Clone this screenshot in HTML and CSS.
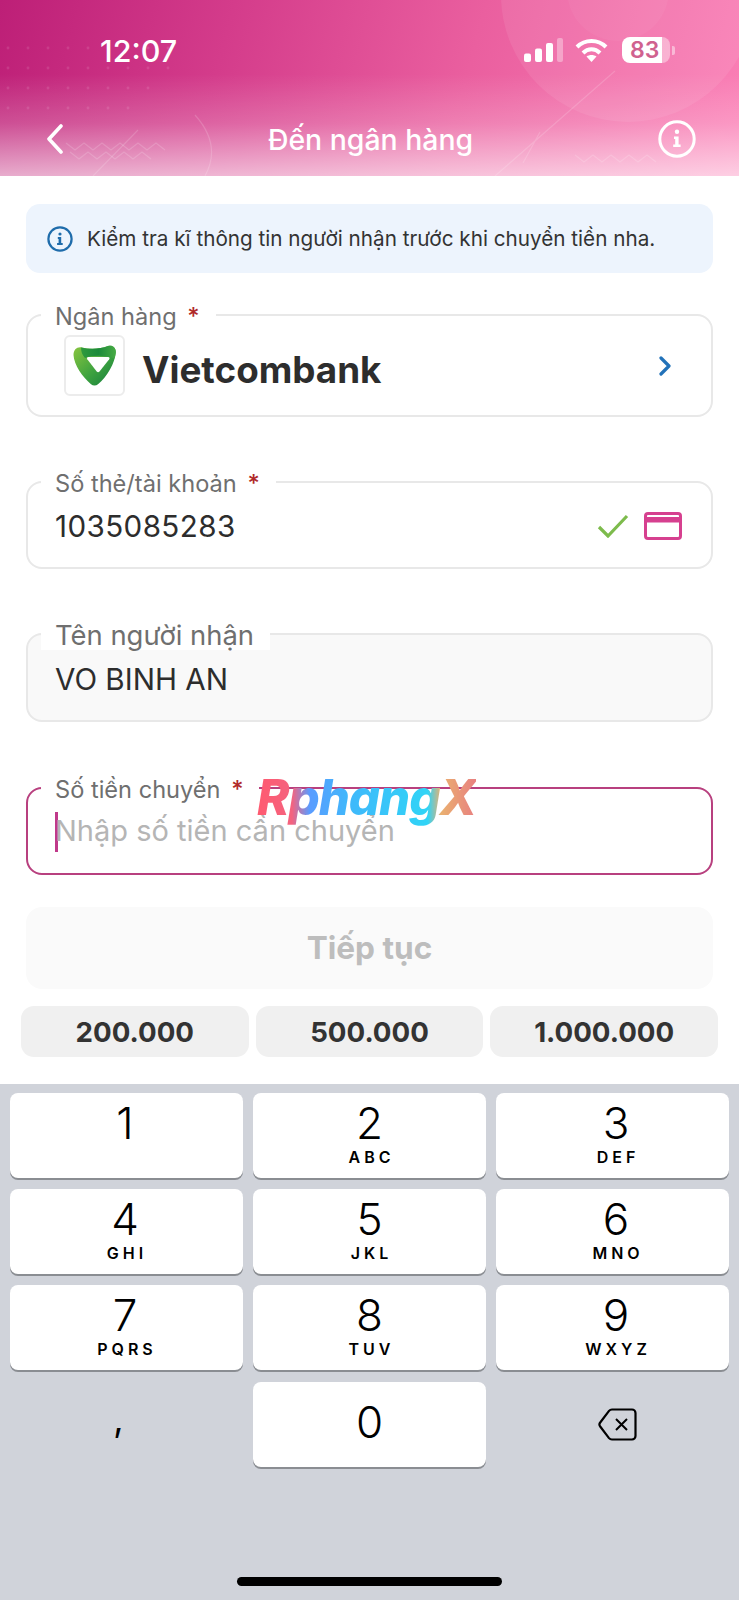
FILE: index.html
```html
<!DOCTYPE html>
<html lang="vi">
<head>
	<meta charset="utf-8">
	<title>Đến ngân hàng</title>
	<link rel="stylesheet" href="styles.css">
</head>
<body>
	<header class="top">
		<svg class="top-art" viewBox="0 0 739 176" width="739" height="176">
			<defs>
				<pattern id="dots" width="20" height="20" patternUnits="userSpaceOnUse">
					<circle cx="8" cy="8" r="1.4" fill="#fff" fill-opacity=".1"/>
				</pattern>
			</defs>
			<path d="M0 30H175V72L120 118H0Z" fill="url(#dots)"/>
			<circle cx="628" cy="-5" r="127" fill="#fff" fill-opacity=".08"/>
			<circle cx="618" cy="-10" r="51" fill="#fff" fill-opacity=".04"/>
			<g fill="none" stroke="#fff" stroke-opacity=".16" stroke-width="1.2">
				<path d="M615 71 495 176M540 132 523 163M138 130 93 176"/>
				<path d="M195 115Q222 145 205 176"/>
				<path d="M66 143l9 7 9-7 9 7 9-7 9 7 9-7 9 7 9-7 9 7 9-7 9 7"/>
				<path d="M70 152l9 7 9-7 9 7 9-7 9 7 9-7 9 7 9-7 9 7"/>
				<path d="M575 155l9 7 9-7 9 7 9-7 9 7 9-7 9 7 9-7 9 7"/>
			</g>
		</svg>
		<div class="status">
			<span class="time">12:07</span>
			<div class="status-icons">
				<svg class="signal" width="40" height="24" viewBox="0 0 40 24">
					<rect x="0" y="15.5" width="7" height="8.5" rx="2" fill="#fff"/>
					<rect x="11" y="10.5" width="7" height="13.5" rx="2" fill="#fff"/>
					<rect x="22" y="5" width="7" height="19" rx="2" fill="#fff"/>
					<rect x="33" y="0" width="6" height="24" rx="2" fill="#fff" fill-opacity=".35"/>
				</svg>
				<svg class="wifi" width="33" height="24" viewBox="0 0 33 24">
					<g fill="none" stroke="#fff" stroke-width="4">
						<path d="M2 9C10 1 23 1 31 9"/>
						<path d="M8 15C13 10 20 10 25 15"/>
					</g>
					<path d="M11.5 18.5C14.5 16.5 18.5 16.5 21.5 18.5L16.5 24Z" fill="#fff"/>
				</svg>
				<div class="battery">
					<span class="battery-level">83</span>
				</div>
				<span class="battery-nub"></span>
			</div>
		</div>
		<nav class="bar">
			<svg class="back" width="18" height="30" viewBox="0 0 18 30">
				<path d="M15 2 3 15l12 13" fill="none" stroke="#fff" stroke-width="3.6" stroke-linecap="round" stroke-linejoin="round"/>
			</svg>
			<h1 class="title">Đến ngân hàng</h1>
			<svg width="38" height="38" viewBox="0 0 38 38">
				<circle cx="19" cy="19" r="17.2" fill="none" stroke="#fff" stroke-width="3"/>
				<circle cx="19" cy="11.8" r="2.2" fill="#fff"/>
				<path d="M16 16.5h4.6v8h2v2.5h-7.4v-2.5h2v-5.5h-1.2z" fill="#fff"/>
			</svg>
		</nav>
	</header>

	<main class="form">
		<div class="notice">
			<svg width="26" height="26" viewBox="0 0 26 26">
				<circle cx="13" cy="13" r="11.6" fill="none" stroke="#1f6cab" stroke-width="2.2"/>
				<circle cx="13" cy="8" r="1.6" fill="#1f6cab"/>
				<path d="M10.8 11h3.4v6h1.5v2h-5.6v-2h1.5v-4h-.8z" fill="#1f6cab"/>
			</svg>
			<p class="notice-text">Kiểm tra kĩ thông tin người nhận trước khi chuyển tiền nha.</p>
		</div>

		<div class="field field-bank">
			<label class="field-label">Ngân hàng <b class="req">*</b></label>
			<div class="bank-logo">
				<svg width="43" height="41" viewBox="0 0 43 41">
					<defs>
						<linearGradient id="vcbMain" x1="0" y1="0" x2="1" y2="1">
							<stop offset="0" stop-color="#8ac640"/>
							<stop offset=".55" stop-color="#3da23f"/>
							<stop offset="1" stop-color="#127c3d"/>
						</linearGradient>
						<linearGradient id="vcbTop" x1="0" y1="0" x2="1" y2="0">
							<stop offset="0" stop-color="#2f9a3e"/>
							<stop offset=".5" stop-color="#1c8a3b"/>
							<stop offset="1" stop-color="#47ab44"/>
						</linearGradient>
					</defs>
					<path d="M.5 10C.5 4.500 4 1.500 9 2.500 17 4.500 27 4.200 35 1 39.500-.3 43 2.500 42.800 7.500 42 18 34 32 25 39.300 23 41 20 41 18 39.300 9.500 32 1 20 .5 10Z" fill="url(#vcbMain)"/>
					<path d="M8 2.500C17 4.500 27 4.200 35 1 39.500-.3 43 2.500 42.800 7.500 42.600 9.500 42 11.500 41.500 13.500 32 10 20 10 12 13 9 10 8 6 8 2.500Z" fill="url(#vcbTop)"/>
					<path d="M15.500 12H35C36.500 12 37 13 36.200 14.200L26.500 26.500C25.700 27.500 24.500 27.500 23.700 26.500L14.300 14.200C13.500 13 14 12 15.500 12Z" fill="#fff"/>
				</svg>
			</div>
			<span class="bank-name">Vietcombank</span>
			<svg class="chevron" width="14" height="20" viewBox="0 0 14 20">
				<path d="M3 2l8 8-8 8" fill="none" stroke="#2272b9" stroke-width="3.200" stroke-linecap="round" stroke-linejoin="round"/>
			</svg>
		</div>

		<div class="field field-account">
			<label class="field-label">Số thẻ/tài khoản <b class="req">*</b></label>
			<span class="value">1035085283</span>
			<svg class="check" width="32" height="24" viewBox="0 0 32 24">
				<path d="M2 13l9 9L30 2" fill="none" stroke="#7dbb4c" stroke-width="3.200"/>
			</svg>
			<svg class="card" width="38" height="28" viewBox="0 0 38 28">
				<rect x="1.500" y="1.500" width="35" height="25" rx="2.500" fill="none" stroke="#d6408f" stroke-width="3"/>
				<rect x="1.500" y="5" width="35" height="5.500" fill="#d6408f"/>
			</svg>
		</div>

		<div class="field field-name">
			<label class="field-label field-label-big">Tên người nhận</label>
			<span class="value">VO BINH AN</span>
		</div>

		<div class="field field-amount">
			<label class="field-label">Số tiền chuyển <b class="req">*</b></label>
			<span class="caret"></span>
			<span class="value placeholder">Nhập số tiền cần chuyển</span>
			<span class="watermark">RphangX</span>
		</div>

		<button class="next" type="button">Tiếp tục</button>

		<div class="chips">
			<span class="chip">200.000</span>
			<span class="chip">500.000</span>
			<span class="chip">1.000.000</span>
		</div>
	</main>

	<section class="keyboard">
		<div class="keys">
			<div class="key"><span class="digit">1</span></div>
			<div class="key"><span class="digit">2</span><span class="letters">ABC</span></div>
			<div class="key"><span class="digit">3</span><span class="letters">DEF</span></div>
			<div class="key"><span class="digit">4</span><span class="letters">GHI</span></div>
			<div class="key"><span class="digit">5</span><span class="letters">JKL</span></div>
			<div class="key"><span class="digit">6</span><span class="letters">MNO</span></div>
			<div class="key"><span class="digit">7</span><span class="letters">PQRS</span></div>
			<div class="key"><span class="digit">8</span><span class="letters">TUV</span></div>
			<div class="key"><span class="digit">9</span><span class="letters">WXYZ</span></div>
			<div class="key-blank"><span class="comma">,</span></div>
			<div class="key key-solo"><span class="digit">0</span></div>
			<div class="key-blank">
				<svg class="delete" width="39" height="33" viewBox="0 0 39 33">
					<path d="M14 1.500H34a3.500 3.500 0 0 1 3.500 3.500V28a3.500 3.500 0 0 1-3.500 3.500H14a4 4 0 0 1-3-1.400L2.200 18.500a3.200 3.200 0 0 1 0-4L11 2.900a4 4 0 0 1 3-1.400Z" fill="none" stroke="#000" stroke-width="2.200"/>
					<path d="M18 11l11 11M29 11 18 22" fill="none" stroke="#000" stroke-width="2"/>
				</svg>
			</div>
		</div>
		<div class="home-bar"></div>
	</section>
</body>
</html>
```

FILE: styles.css
```css
* {
	box-sizing: border-box;
}

body {
	margin: 0;
	width: 739px;
	height: 1600px;
	overflow: hidden;
	background: #fff;
	font-family: Inter, "Noto Sans", sans-serif;
	color: #2d2d2d;
}

/* header */
.top {
	position: relative;
	height: 176px;
	background:
		linear-gradient(to bottom, rgba(255, 255, 255, 0) 42%, rgba(255, 255, 255, .2) 70%, rgba(255, 255, 255, .62) 100%),
		linear-gradient(105deg, #bd1f77 0%, #d43c8b 30%, #ea5f9f 62%, #fb80b6 100%);
	overflow: hidden;
}

.top-art {
	position: absolute;
	left: 0;
	top: 0;
}

.status {
	position: relative;
	height: 70px;
	padding: 30px 64px 0 100px;
	display: flex;
	align-items: center;
	justify-content: space-between;
}

.time {
	color: #fff;
	font-size: 30.5px;
	font-weight: 500;
}

.status-icons {
	display: flex;
	align-items: center;
}

.signal {
	margin-right: 11px;
}

.wifi {
	margin-right: 14px;
}

.battery {
	width: 48px;
	height: 26px;
	border-radius: 8px;
	background: linear-gradient(to right, #fff 83%, rgba(255, 255, 255, .4) 83%);
	display: flex;
	align-items: center;
	padding-left: 8px;
}

.battery-level {
	color: #d0628f;
	font-size: 23px;
	font-weight: 600;
}

.battery-nub {
	width: 3px;
	height: 9px;
	margin-left: 2px;
	border-radius: 0 2px 2px 0;
	background: rgba(255, 255, 255, .45);
}

.bar {
	position: relative;
	margin-top: 49px;
	height: 40px;
	padding: 0 41px 0 46px;
	display: grid;
	grid-template-columns: 37px 1fr 40px;
	align-items: center;
}

.title {
	margin: 0;
	text-align: center;
	color: #fff;
	font-size: 28.4px;
	font-weight: 500;
}

/* form */
.form {
	height: 908px;
	padding: 28px 26px 0;
	display: flex;
	flex-direction: column;
}

.notice {
	height: 69px;
	flex: none;
	padding-left: 21px;
	border-radius: 14px;
	background: #edf4fd;
	display: flex;
	align-items: center;
	gap: 14px;
}

.notice-text {
	margin: 0;
	font-size: 20.7px;
	color: #333;
}

.field {
	position: relative;
	flex: none;
	height: 88px;
	margin-top: 64px;
	padding: 2px 29px 0 27px;
	border: 2px solid #e8e8e8;
	border-radius: 16px;
	display: flex;
	align-items: center;
}

.field-label {
	position: absolute;
	left: 13px;
	top: -14px;
	padding: 0 16px 0 14px;
	background: #fff;
	color: #6f6f6f;
	font-size: 23.6px;
	line-height: 30px;
}

.field-label-big {
	top: -15px;
	font-size: 27.4px;
	line-height: 30px;
}

.req {
	color: #b02a2a;
	font-weight: 500;
	margin-left: 4px;
}

.value {
	font-size: 29.6px;
	flex: 1;
}

.field-account .value {
	letter-spacing: .4px;
}

.field-bank {
	height: 103px;
	margin-top: 41px;
	padding: 0 39px 0 36px;
}

.bank-logo {
	width: 61px;
	height: 61px;
	flex: none;
	border: 2px solid #ececec;
	border-radius: 6px;
	display: flex;
	align-items: center;
	justify-content: center;
}

.bank-name {
	flex: 1;
	margin-left: 17px;
	margin-top: 8px;
	font-size: 36.8px;
	font-weight: 700;
}

.check {
	margin-right: 15px;
}

.field-name {
	height: 89px;
	background: #f9f9f9;
}

.field-amount {
	margin-top: 65px;
	border-color: #b8407f;
}

.caret {
	width: 3px;
	height: 40px;
	margin-right: -3px;
	background: #c0398a;
}

.placeholder {
	color: #b5b5b5;
	font-size: 29px;
	margin-top: -3px;
}

.watermark {
	position: absolute;
	left: 229px;
	top: -21px;
	font-size: 49px;
	font-weight: 800;
	font-style: italic;
	letter-spacing: -1px;
	background: linear-gradient(to right, #ff5a70 0%, #f4637f 16%, #5a9cff 24%, #3fb8fb 42%, #30d4f6 78%, #eab070 84%, #e88080 100%);
	-webkit-background-clip: text;
	background-clip: text;
	color: transparent;
}

.next {
	flex: none;
	height: 82px;
	margin-top: 32px;
	padding-bottom: 3px;
	border: none;
	border-radius: 16px;
	background: #fafafa;
	color: #bdbdbd;
	font-family: inherit;
	font-size: 31.6px;
	font-weight: 700;
}

.chips {
	flex: none;
	margin: 17px -5px 0;
	display: grid;
	grid-template-columns: repeat(3, 1fr);
	gap: 7px;
}

.chip {
	height: 51px;
	border-radius: 13px;
	background: #f0f0f0;
	color: #333;
	font-size: 27.7px;
	font-weight: 700;
	display: flex;
	align-items: center;
	justify-content: center;
}

/* keyboard */
.keyboard {
	height: 516px;
	padding: 9px 10px 0;
	background: #d0d3da;
	display: flex;
	flex-direction: column;
}

.keys {
	display: grid;
	grid-template-columns: repeat(3, 233px);
	grid-auto-rows: 85px;
	column-gap: 10px;
	row-gap: 11.2px;
}

.key {
	padding-top: 8px;
	border-radius: 8px;
	background: #fff;
	box-shadow: 0 2px 0 #8a8d92;
	color: #000;
	display: flex;
	flex-direction: column;
	align-items: center;
}

.key:nth-child(3n) {
	padding-left: 7px;
}

.key:nth-child(3n+1) {
	padding-right: 3px;
}

.key-solo {
	padding-top: 18px;
}

.digit {
	font-size: 44px;
	line-height: 44px;
	font-weight: 300;
}

.letters {
	margin-top: 3px;
	font-size: 16px;
	line-height: 18px;
	font-weight: 600;
	letter-spacing: 4px;
	margin-right: -4px;
}

.key-blank {
	display: flex;
	align-items: center;
	justify-content: center;
}

.comma {
	margin: 0 16px 10px 0;
	font-size: 36px;
	color: #000;
}

.delete {
	margin-left: 9px;
}

.home-bar {
	width: 265px;
	height: 9px;
	margin: 110px auto 0;
	border-radius: 5px;
	background: #000;
}
```
